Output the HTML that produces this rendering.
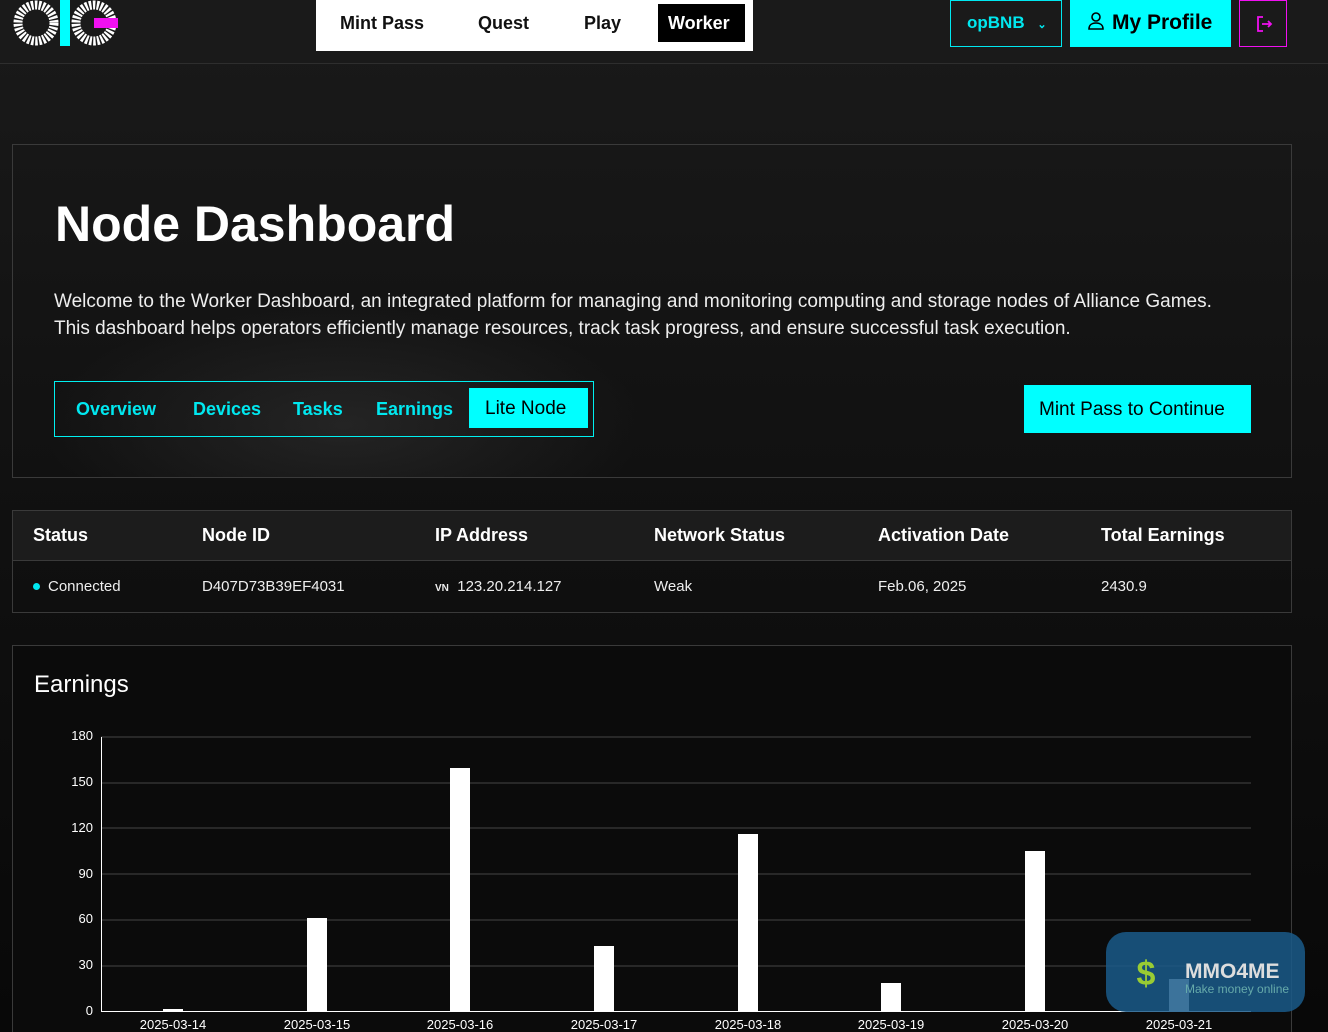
<!DOCTYPE html>
<html><head><meta charset="utf-8"><style>
*{margin:0;padding:0;box-sizing:border-box}
html{overflow:hidden;height:1032px}
body{width:1328px;height:1032px;overflow:hidden;background:linear-gradient(#1a1a1a,#121212 40%,#080808);font-family:"Liberation Sans",sans-serif;color:#fff;position:relative}
.hdr{position:absolute;left:0;top:0;width:1328px;height:64px;border-bottom:1px solid #2e2e2e;background:#1a1a1a}
.nav{position:absolute;left:316px;top:0;width:437px;height:51px;background:#fff;font-weight:bold;font-size:18px;color:#111}
.nav span{position:absolute;top:13px}
.nav .w{left:342px;top:4px;width:87px;height:38px;background:#000;color:#fff;padding:9px 0 0 10px}
.btn{position:absolute;top:0;height:47px}
.box{position:absolute;left:12px;top:144px;width:1280px;height:334px;border:1px solid #3a3a3a;background:radial-gradient(ellipse 300px 120px at 330px 280px,rgba(70,70,70,.35),transparent)}
h1{position:absolute;left:42px;top:50px;font-size:50px;font-weight:bold}
.p{position:absolute;left:41px;top:143px;font-size:19px;line-height:27px;color:#eee;white-space:nowrap}
.tabs{position:absolute;left:41px;top:236px;width:540px;height:56px;border:1px solid #00f0f0}
.tabs span{position:absolute;top:17px;color:#00e8f0;font-weight:bold;font-size:18px}
.cy{background:#00ffff;color:#000}
.tbl{position:absolute;left:12px;top:510px;width:1280px;height:103px;border:1px solid #3a3a3a}
.tbl .h{height:50px;border-bottom:1px solid #3a3a3a;background:#1c1c1c}
.tbl div span{position:absolute}
.ch{position:absolute;left:12px;top:645px;width:1280px;height:387px;border:1px solid #3a3a3a;border-bottom:none;background:#0b0b0b}
</style></head><body>
<div class="hdr">
<svg style="position:absolute;left:10px;top:0" width="110" height="48">
<circle cx="26" cy="23" r="18" fill="none" stroke="#fff" stroke-width="9" stroke-dasharray="2.4 1.4"/>
<rect x="50" y="0" width="10" height="46" fill="#00ffff"/>
<circle cx="84" cy="23" r="18" fill="none" stroke="#fff" stroke-width="9" stroke-dasharray="2.4 1.4"/>
<rect x="84" y="18" width="24" height="10" fill="#f010f0"/>
</svg>
<div class="nav"><span style="left:24px">Mint Pass</span><span style="left:162px">Quest</span><span style="left:268px">Play</span><span class="w">Worker</span></div>
<div class="btn" style="left:950px;width:112px;border:1px solid #00e8f0;color:#00e8f0;font-weight:bold;font-size:17px;padding:12px 0 0 16px">opBNB <span style="font-size:11px;margin-left:8px">⌄</span></div>
<div class="btn cy" style="left:1070px;width:161px;font-weight:bold;font-size:21px;padding:11px 0 0 16px"><svg width="20" height="20" viewBox="0 0 20 20" style="vertical-align:-2px;margin-right:6px"><circle cx="10" cy="6" r="4" fill="none" stroke="#000" stroke-width="1.6"/><path d="M3 18c0-4 3-6 7-6s7 2 7 6z" fill="none" stroke="#000" stroke-width="1.6"/></svg>My Profile</div>
<div class="btn" style="left:1239px;width:48px;border:1px solid #f010f0"><svg style="position:absolute;left:15px;top:14px" width="18" height="18" viewBox="0 0 18 18" fill="none" stroke="#f010f0" stroke-width="1.8"><path d="M8 2H3v14h5M7 9h9M13 6l3 3-3 3"/></svg></div>
</div>
<div class="box">
<h1>Node Dashboard</h1>
<div class="p">Welcome to the Worker Dashboard, an integrated platform for managing and monitoring computing and storage nodes of Alliance Games.<br>This dashboard helps operators efficiently manage resources, track task progress, and ensure successful task execution.</div>
<div class="tabs"><span style="left:21px">Overview</span><span style="left:138px">Devices</span><span style="left:238px">Tasks</span><span style="left:321px">Earnings</span><span class="cy" style="left:414px;top:6px;width:119px;height:40px;padding:10px 0 0 16px;font-weight:normal;color:#000;font-size:19px">Lite Node</span></div>
<div class="cy" style="position:absolute;left:1011px;top:240px;width:227px;height:48px;font-size:19px;padding:14px 0 0 15px">Mint Pass to Continue</div>
</div>
<div class="tbl">
<div class="h" style="position:relative;font-weight:bold;font-size:18px"><span style="left:20px;top:14px">Status</span><span style="left:189px;top:14px">Node ID</span><span style="left:422px;top:14px">IP Address</span><span style="left:641px;top:14px">Network Status</span><span style="left:865px;top:14px">Activation Date</span><span style="left:1088px;top:14px">Total Earnings</span></div>
<div style="position:relative;font-size:15px;color:#eee"><span style="left:20px;top:17px"><span style="display:inline-block;width:7px;height:7px;border-radius:50%;background:#00e8f0;position:static;margin-right:8px;vertical-align:1px"></span>Connected</span><span style="left:189px;top:17px">D407D73B39EF4031</span><span style="left:422px;top:17px"><b style="font-size:10px">VN</b>&nbsp; 123.20.214.127</span><span style="left:641px;top:17px">Weak</span><span style="left:865px;top:17px">Feb.06, 2025</span><span style="left:1088px;top:17px">2430.9</span></div>
</div>
<div class="ch"><div style="position:absolute;left:21px;top:25px;font-size:24px">Earnings</div></div>
<svg style="position:absolute;left:0;top:0" width="1328" height="1032" font-family="Liberation Sans" font-size="13" fill="#fff">
<g stroke="#444"><line x1="101" x2="1251" y1="737" y2="737"/><line x1="101" x2="1251" y1="783" y2="783"/><line x1="101" x2="1251" y1="828" y2="828"/><line x1="101" x2="1251" y1="874" y2="874"/><line x1="101" x2="1251" y1="920" y2="920"/><line x1="101" x2="1251" y1="966" y2="966"/></g>
<g stroke="#fff"><line x1="101" x2="1251" y1="1011.5" y2="1011.5"/><line x1="101.5" x2="101.5" y1="737" y2="1011"/></g>
<g text-anchor="end"><text x="93" y="740">180</text><text x="93" y="786">150</text><text x="93" y="832">120</text><text x="93" y="878">90</text><text x="93" y="923">60</text><text x="93" y="969">30</text><text x="93" y="1015">0</text></g>
<g><rect x="163" y="1009" width="20" height="2"/><rect x="307" y="918" width="20" height="93"/><rect x="450" y="768" width="20" height="243"/><rect x="594" y="946" width="20" height="65"/><rect x="738" y="834" width="20" height="177"/><rect x="881" y="983" width="20" height="28"/><rect x="1025" y="851" width="20" height="160"/><rect x="1169" y="979" width="20" height="32"/></g>
<g text-anchor="middle"><text x="173" y="1029">2025-03-14</text><text x="317" y="1029">2025-03-15</text><text x="460" y="1029">2025-03-16</text><text x="604" y="1029">2025-03-17</text><text x="748" y="1029">2025-03-18</text><text x="891" y="1029">2025-03-19</text><text x="1035" y="1029">2025-03-20</text><text x="1179" y="1029">2025-03-21</text></g>
<rect x="1106" y="932" width="199" height="80" rx="20" fill="#1a5a8a" opacity=".85"/>
<text x="1146" y="985" font-size="34" font-weight="bold" fill="#9c3" text-anchor="middle">$</text>
<text x="1185" y="978" font-size="21" font-weight="bold" fill="#ddd">MMO4ME</text>
<text x="1185" y="993" font-size="12" fill="#6aa">Make money online</text>
</svg>
</body></html>
